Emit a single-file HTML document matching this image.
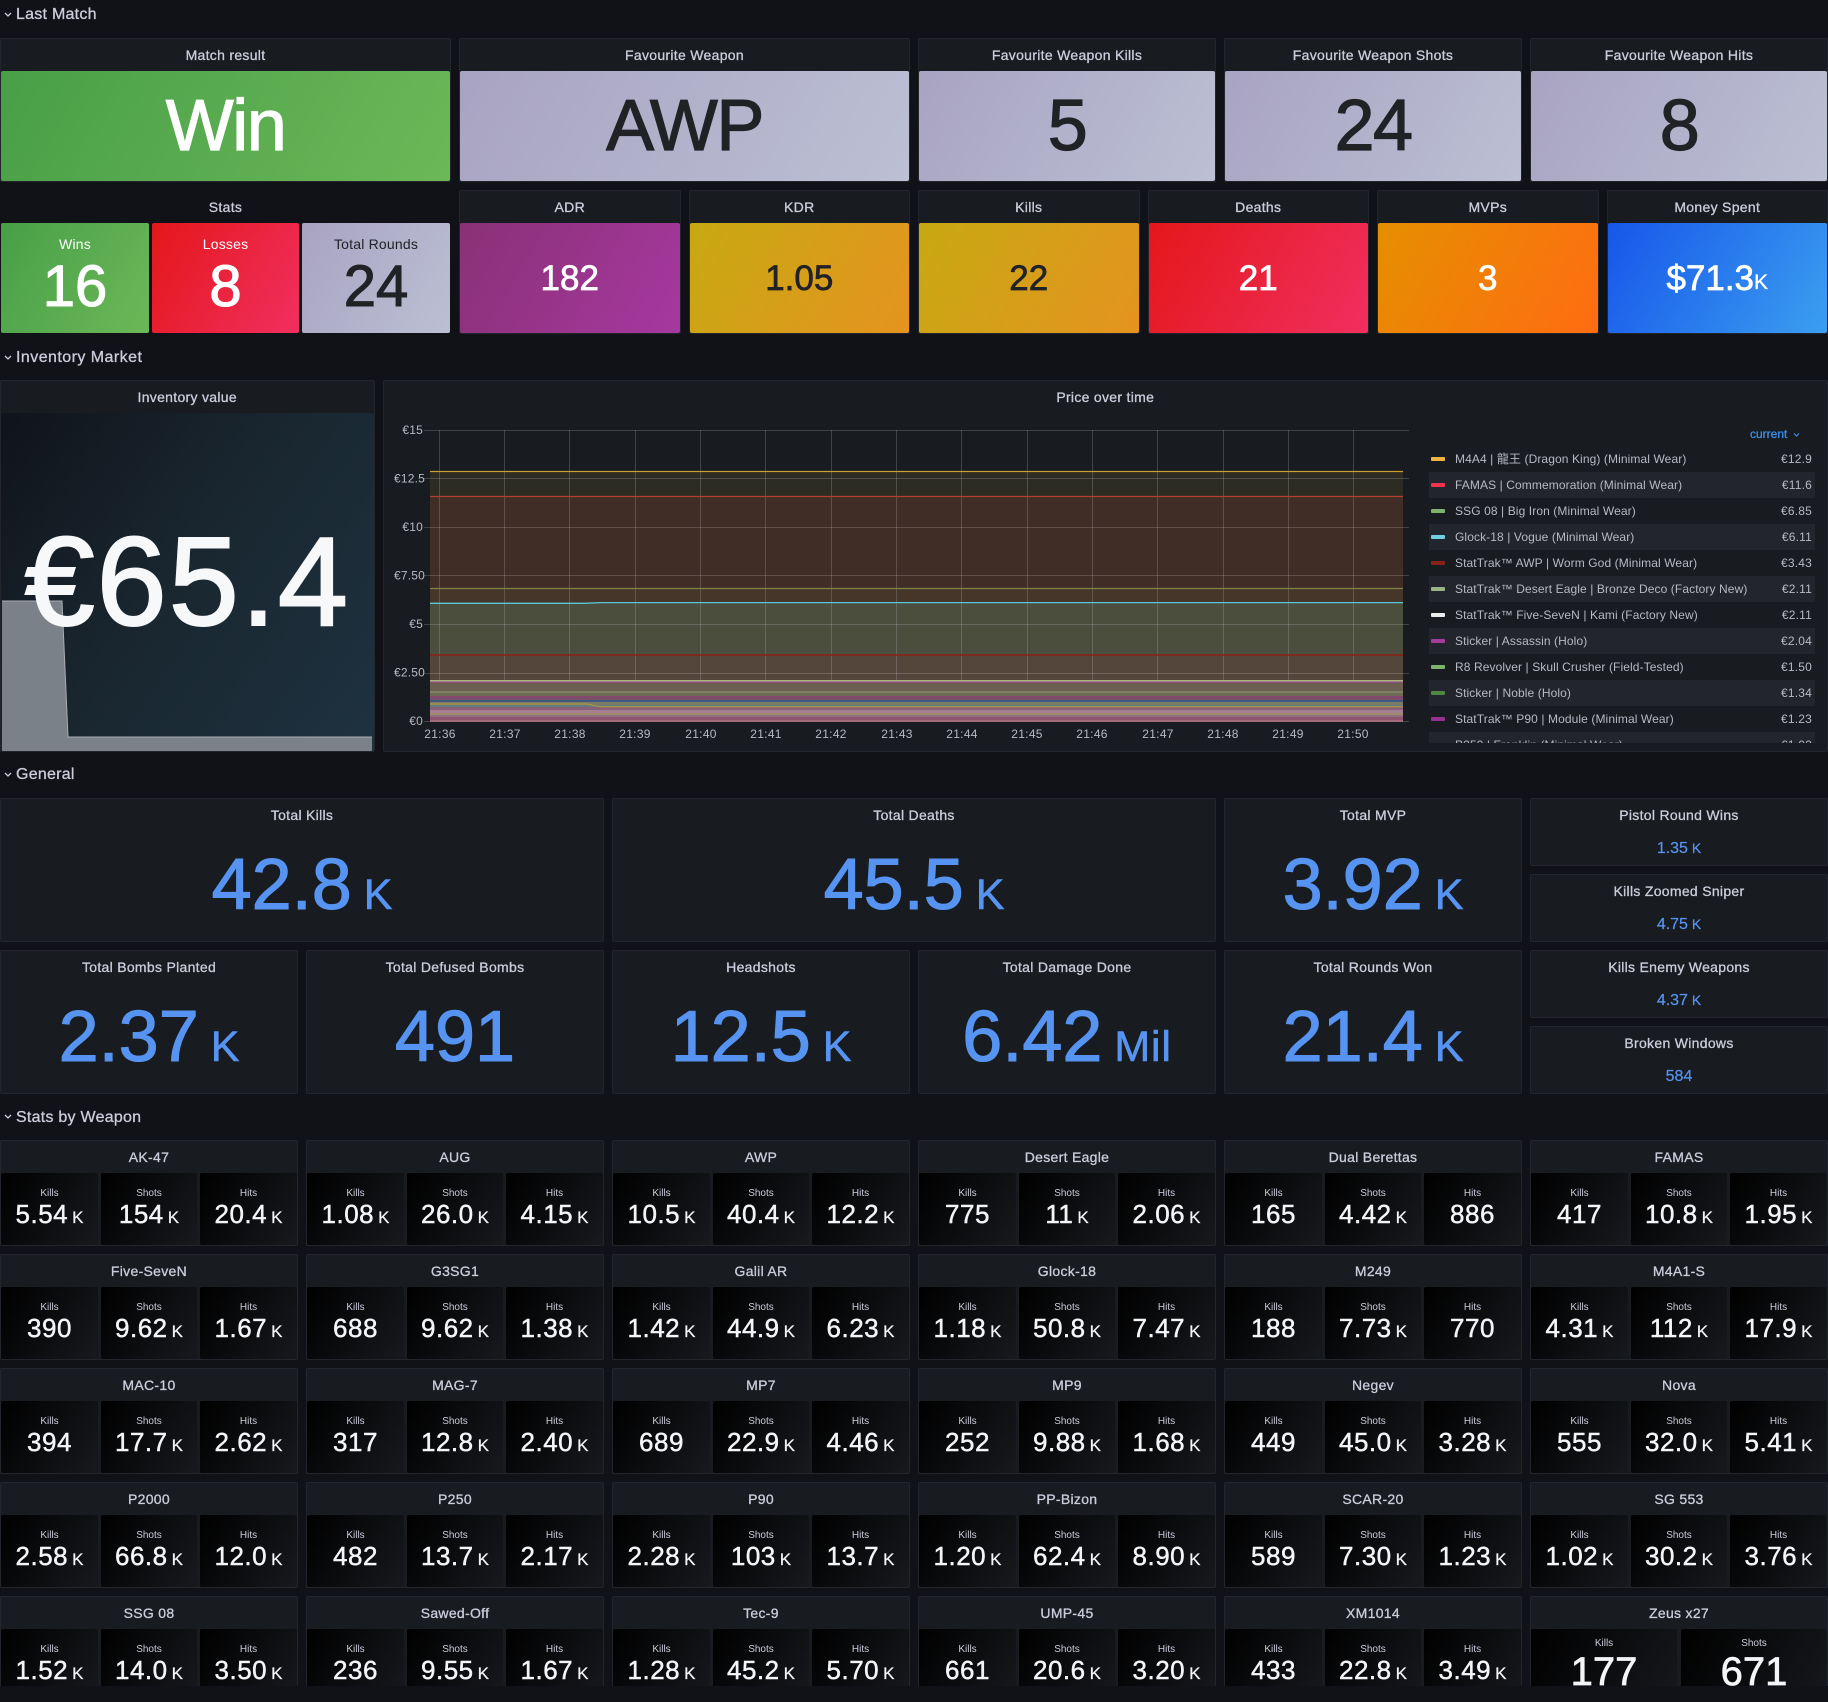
<!DOCTYPE html>
<html><head><meta charset="utf-8"><title>Dashboard</title>
<style>
html,body{margin:0;padding:0;background:#111217}
body{width:1828px;height:1702px;overflow:hidden;position:relative;font-family:"Liberation Sans","Noto Sans CJK JP",sans-serif;color:#ccccdc}
#c{position:absolute;left:0;top:0;width:1828px;height:1686px;overflow:hidden}
.r{position:absolute;left:16px;font-size:16px;line-height:28px;height:28px;margin-top:1px;-webkit-text-stroke:.3px;letter-spacing:.25px;white-space:nowrap}
.ch{position:absolute;left:0;width:16px;height:28px}
.p{position:absolute;box-sizing:border-box;background:#181b1f;border:1px solid #22252b;border-radius:2px}
.t{position:absolute;left:0;right:0;top:6px;height:20px;line-height:20px;font-size:14px;text-align:center;-webkit-text-stroke:.3px;letter-spacing:.3px;white-space:nowrap}
.f{position:absolute;left:0;right:0;top:32px;bottom:0;border-radius:2px;display:flex;align-items:center;justify-content:center;white-space:nowrap;color:#fff}
.big{font-size:72px;-webkit-text-stroke:1.2px;letter-spacing:-1.5px}
.mid{font-size:35px;-webkit-text-stroke:.7px;padding-top:2px;box-sizing:border-box}
.gr{background:linear-gradient(120deg,#489f47,#6cb858)}
.gy{background:linear-gradient(120deg,#a8a3c2,#bcc0d4)}
.rd{background:linear-gradient(120deg,#e4171a,#f12f60)}
.pu{background:linear-gradient(120deg,#8a3176,#a6389f)}
.ye{background:linear-gradient(120deg,#c7a912,#e5931f)}
.or{background:linear-gradient(120deg,#e58f00,#ff6c12)}
.bl{background:linear-gradient(120deg,#1756ea,#3b9ff0)}
.s{position:absolute;top:223px;height:110px;border-radius:2px;text-align:center;color:#fff}
.s i{position:absolute;left:0;right:0;top:11px;font-style:normal;font-size:14px;line-height:20px;letter-spacing:.2px}
.s b{position:absolute;left:0;right:0;top:32px;font-weight:normal;font-size:58px;line-height:64px;-webkit-text-stroke:1.1px}
.g{position:absolute;left:0;right:0;top:56px;text-align:center;color:#5794f2;font-size:72px;line-height:60px;-webkit-text-stroke:1.1px;white-space:nowrap}
.g u{text-decoration:none;font-size:43px;-webkit-text-stroke:.6px}
.h{position:absolute;left:0;right:0;top:39px;text-align:center;color:#5794f2;font-size:16px;line-height:20px;-webkit-text-stroke:.2px;white-space:nowrap}
.h u{text-decoration:none;font-size:14px}
.w{position:absolute;box-sizing:border-box;width:298px;height:106px;background:#181b1f;border:1px solid #22252b;border-radius:2px}
.b{position:absolute;top:32px;height:72px;width:96px;border-radius:2px;background:linear-gradient(120deg,#000,#17191d);text-align:center;color:#f4f5f8;white-space:nowrap}
.b1{left:0;width:97px}.b2{left:100px}.b3{left:199px;width:97px}
.b i{position:absolute;left:0;right:0;top:14px;font-style:normal;font-size:10px;line-height:14px;color:#ccccdc}
.b b{position:absolute;left:0;right:0;top:27px;font-weight:normal;font-size:26px;line-height:28px;letter-spacing:.5px;-webkit-text-stroke:.45px}
.b u{text-decoration:none;font-size:17px;margin-left:4px;letter-spacing:0;-webkit-text-stroke:.2px}
.z{width:146px;top:32px;height:80px}
.z b{font-size:40px;line-height:44px;top:21px;letter-spacing:0;-webkit-text-stroke:.7px}
.z i{top:8px}
.l{position:absolute;left:1429px;width:386px;height:26px;line-height:26px;font-size:12px;color:#b8b9c4;white-space:nowrap}
.l s{position:absolute;left:2px;top:11px;width:14px;height:4px;border-radius:1px;text-decoration:none}
.l span{position:absolute;left:26px;letter-spacing:.1px}
.l em{position:absolute;right:3px;font-style:normal;letter-spacing:.2px}
.e{background:#22252b}
</style></head><body><div id="c">

<svg class="ch" style="top:0" viewBox="0 0 16 28"><path d="M5 13l3 3 3-3" fill="none" stroke="#ccccdc" stroke-width="1.3"/></svg><div class="r" style="top:0">Last Match</div>

<div class="p" style="left:0;top:38px;width:451px;height:144px"><div class="t">Match result</div><div class="f gr big">Win</div></div>
<div class="p" style="left:459px;top:38px;width:451px;height:144px"><div class="t">Favourite Weapon</div><div class="f gy big" style="color:#202226">AWP</div></div>
<div class="p" style="left:918px;top:38px;width:298px;height:144px"><div class="t">Favourite Weapon Kills</div><div class="f gy big" style="color:#202226">5</div></div>
<div class="p" style="left:1224px;top:38px;width:298px;height:144px"><div class="t">Favourite Weapon Shots</div><div class="f gy big" style="color:#202226">24</div></div>
<div class="p" style="left:1530px;top:38px;width:298px;height:144px"><div class="t">Favourite Weapon Hits</div><div class="f gy big" style="color:#202226">8</div></div>

<div class="t" style="left:0;right:auto;width:451px;top:197px">Stats</div>
<div class="s gr" style="left:1px;width:148px"><i>Wins</i><b>16</b></div>
<div class="s rd" style="left:152px;width:147px"><i>Losses</i><b>8</b></div>
<div class="s gy" style="left:302px;width:148px;color:#202226"><i>Total Rounds</i><b>24</b></div>

<div class="p" style="left:459px;top:190px;width:221.5px;height:144px"><div class="t">ADR</div><div class="f pu mid">182</div></div>
<div class="p" style="left:688.5px;top:190px;width:221.5px;height:144px"><div class="t">KDR</div><div class="f ye mid" style="color:#202226">1.05</div></div>
<div class="p" style="left:918px;top:190px;width:221.5px;height:144px"><div class="t">Kills</div><div class="f ye mid" style="color:#202226">22</div></div>
<div class="p" style="left:1147.5px;top:190px;width:221.5px;height:144px"><div class="t">Deaths</div><div class="f rd mid">21</div></div>
<div class="p" style="left:1377px;top:190px;width:221.5px;height:144px"><div class="t">MVPs</div><div class="f or mid">3</div></div>
<div class="p" style="left:1606.5px;top:190px;width:221.5px;height:144px"><div class="t">Money Spent</div><div class="f bl mid">$71.3<span style="font-size:21px;position:relative;top:4px;-webkit-text-stroke:.3px">K</span></div></div>

<svg class="ch" style="top:343px" viewBox="0 0 16 28"><path d="M5 13l3 3 3-3" fill="none" stroke="#ccccdc" stroke-width="1.3"/></svg><div class="r" style="top:343px;letter-spacing:.45px">Inventory Market</div>

<div class="p" style="left:0;top:380px;width:374.5px;height:372px"><div class="t">Inventory value</div>
<div class="f" style="background:linear-gradient(125deg,#10131b 0%,#19262f 45%,#1e3240 100%);overflow:hidden">
<svg style="position:absolute;left:0;top:0" width="373" height="338" viewBox="0 0 373 338"><path d="M1 188H61L67 324H371V338H1Z" fill="#7b8188"/><path d="M1 188H61L67 324H371" fill="none" stroke="#a9aeb5" stroke-width="1"/></svg>
<span style="position:relative;font-size:126px;line-height:126px;top:0;-webkit-text-stroke:2px;color:#f7f8fa;letter-spacing:2px">€65.4</span></div></div>

<div class="p" style="left:382.5px;top:380px;width:1445.5px;height:372px"><div class="t">Price over time</div></div>
<svg style="position:absolute;left:0;top:0" width="1828" height="760" font-family="Liberation Sans" font-size="12" fill="#b8b9c4">
<rect x="430" y="471" width="973" height="25" fill="#2d2c22"/>
<rect x="430" y="496" width="973" height="92" fill="#402e26"/>
<rect x="430" y="588" width="973" height="15" fill="#453629"/>
<rect x="430" y="603" width="973" height="52" fill="#4b4d3d"/>
<rect x="430" y="655" width="973" height="26" fill="#54463b"/>
<g stroke="#cfcfd8" stroke-opacity=".22">
<path d="M424 430.5H1409M424 478.5H1409M424 527.5H1409M424 575.5H1409M424 624.5H1409M424 673.5H1409M424 721.5H1409"/>
<path d="M439.5 430V700M504.5 430V700M569.5 430V700M635.5 430V700M700.5 430V700M765.5 430V700M831.5 430V700M896.5 430V700M961.5 430V700M1027.5 430V700M1092.5 430V700M1157.5 430V700M1223.5 430V700M1288.5 430V700M1353.5 430V700"/>
</g>
<rect x="430" y="680" width="973" height="1.5" fill="#aab87a"/>
<rect x="430" y="681.5" width="973" height="1" fill="#a33fa0"/>
<rect x="430" y="682.5" width="973" height="9" fill="#6c5f52"/>
<rect x="430" y="691" width="973" height="2" fill="#7d8063"/>
<rect x="430" y="693" width="973" height="3" fill="#6e6a55"/>
<rect x="430" y="696" width="973" height="2" fill="#84486f"/>
<rect x="430" y="698" width="973" height="2" fill="#76506a"/>
<rect x="430" y="700" width="973" height="2" fill="#3f5a7e"/>
<rect x="430" y="702" width="973" height="3" fill="#7a7c66"/>
<rect x="430" y="705" width="973" height="2" fill="#5f7d7f"/>
<rect x="430" y="707" width="973" height="3" fill="#8a6078"/>
<rect x="430" y="710" width="973" height="3" fill="#a57f92"/>
<rect x="430" y="713" width="973" height="2" fill="#a08a6c"/>
<rect x="430" y="715" width="973" height="2" fill="#8f6f80"/>
<rect x="430" y="717" width="973" height="3" fill="#8f5570"/>
<rect x="430" y="720" width="973" height="2" fill="#a16b7a"/>
<g fill="none" stroke-width="1.3">
<path d="M430 471.5H1403" stroke="#c9a02e"/>
<path d="M430 496.5H1403" stroke="#b23d33"/>
<path d="M430 588.5H1403" stroke="#7c8345"/>
<path d="M430 603.3H585L600 602.6H1403" stroke="#5bc8da"/>
<path d="M430 655H1403" stroke="#8b1f16" stroke-width="1.6"/>
<path d="M430 704H587L600 706.7H1403" stroke="#c9a02e" stroke-opacity=".65"/>
</g>
<g text-anchor="end" letter-spacing=".2">
<text x="423" y="434">€15</text><text x="425" y="482.500">€12.5</text><text x="423" y="531">€10</text><text x="425" y="579.500">€7.50</text><text x="423" y="628">€5</text><text x="425" y="676.500">€2.50</text><text x="423" y="725">€0</text>
</g>
<g text-anchor="middle" letter-spacing=".3">
<text x="440" y="738">21:36</text><text x="505" y="738">21:37</text><text x="570" y="738">21:38</text><text x="635" y="738">21:39</text><text x="701" y="738">21:40</text><text x="766" y="738">21:41</text><text x="831" y="738">21:42</text><text x="897" y="738">21:43</text><text x="962" y="738">21:44</text><text x="1027" y="738">21:45</text><text x="1092" y="738">21:46</text><text x="1158" y="738">21:47</text><text x="1223" y="738">21:48</text><text x="1288" y="738">21:49</text><text x="1353" y="738">21:50</text>
</g>
<text x="1750" y="438" style="fill:#3d8fe8;stroke:#3d8fe8;stroke-width:.3px">current</text>
<path d="M1794 433.500l2.500 2.500 2.500-2.500" fill="none" stroke="#3d8fe8" stroke-width="1.200"/>
</svg>
<div style="position:absolute;left:0;top:445px;width:1828px;height:297.700px;overflow:hidden">
<div style="position:relative;top:-445px">
<div class="l" style="top:446px"><s style="background:#f2b43f"></s><span>M4A4 | 龍王 (Dragon King) (Minimal Wear)</span><em>€12.9</em></div>
<div class="l e" style="top:472px"><s style="background:#f2334e"></s><span>FAMAS | Commemoration (Minimal Wear)</span><em>€11.6</em></div>
<div class="l" style="top:498px"><s style="background:#7eb26d"></s><span>SSG 08 | Big Iron (Minimal Wear)</span><em>€6.85</em></div>
<div class="l e" style="top:524px"><s style="background:#6ed0e0"></s><span>Glock-18 | Vogue (Minimal Wear)</span><em>€6.11</em></div>
<div class="l" style="top:550px"><s style="background:#892015"></s><span>StatTrak™ AWP | Worm God (Minimal Wear)</span><em>€3.43</em></div>
<div class="l e" style="top:576px"><s style="background:#9ab385"></s><span>StatTrak™ Desert Eagle | Bronze Deco (Factory New)</span><em>€2.11</em></div>
<div class="l" style="top:602px"><s style="background:#ececec"></s><span>StatTrak™ Five-SeveN | Kami (Factory New)</span><em>€2.11</em></div>
<div class="l e" style="top:628px"><s style="background:#a83a9c"></s><span>Sticker | Assassin (Holo)</span><em>€2.04</em></div>
<div class="l" style="top:654px"><s style="background:#7eb26d"></s><span>R8 Revolver | Skull Crusher (Field-Tested)</span><em>€1.50</em></div>
<div class="l e" style="top:680px"><s style="background:#508642"></s><span>Sticker | Noble (Holo)</span><em>€1.34</em></div>
<div class="l" style="top:706px"><s style="background:#9b2f90"></s><span>StatTrak™ P90 | Module (Minimal Wear)</span><em>€1.23</em></div>
<div class="l e" style="top:732px"><span>P250 | Franklin (Minimal Wear)</span><em>€1.02</em></div>
</div></div>

<svg class="ch" style="top:760px" viewBox="0 0 16 28"><path d="M5 13l3 3 3-3" fill="none" stroke="#ccccdc" stroke-width="1.3"/></svg><div class="r" style="top:760px">General</div>

<div class="p" style="left:0;top:798px;width:604px;height:144px"><div class="t">Total Kills</div><div class="g">42.8<u> K</u></div></div>
<div class="p" style="left:612px;top:798px;width:604px;height:144px"><div class="t">Total Deaths</div><div class="g">45.5<u> K</u></div></div>
<div class="p" style="left:1224px;top:798px;width:298px;height:144px"><div class="t">Total MVP</div><div class="g">3.92<u> K</u></div></div>
<div class="p" style="left:1530px;top:798px;width:298px;height:68px"><div class="t">Pistol Round Wins</div><div class="h">1.35<u> K</u></div></div>
<div class="p" style="left:1530px;top:874px;width:298px;height:68px"><div class="t">Kills Zoomed Sniper</div><div class="h">4.75<u> K</u></div></div>
<div class="p" style="left:0;top:950px;width:298px;height:144px"><div class="t">Total Bombs Planted</div><div class="g">2.37<u> K</u></div></div>
<div class="p" style="left:306px;top:950px;width:298px;height:144px"><div class="t">Total Defused Bombs</div><div class="g">491</div></div>
<div class="p" style="left:612px;top:950px;width:298px;height:144px"><div class="t">Headshots</div><div class="g">12.5<u> K</u></div></div>
<div class="p" style="left:918px;top:950px;width:298px;height:144px"><div class="t">Total Damage Done</div><div class="g">6.42<u> <span style="letter-spacing:.8px">Mil</span></u></div></div>
<div class="p" style="left:1224px;top:950px;width:298px;height:144px"><div class="t">Total Rounds Won</div><div class="g">21.4<u> K</u></div></div>
<div class="p" style="left:1530px;top:950px;width:298px;height:68px"><div class="t">Kills Enemy Weapons</div><div class="h">4.37<u> K</u></div></div>
<div class="p" style="left:1530px;top:1026px;width:298px;height:68px"><div class="t">Broken Windows</div><div class="h" style="top:40px">584</div></div>

<svg class="ch" style="top:1102px" viewBox="0 0 16 28"><path d="M5 13l3 3 3-3" fill="none" stroke="#ccccdc" stroke-width="1.3"/></svg><div class="r" style="top:1103px">Stats by Weapon</div>

<div class="w" style="left:0;top:1140px"><div class="t">AK-47</div><div class="b b1"><i>Kills</i><b>5.54<u>K</u></b></div><div class="b b2"><i>Shots</i><b>154<u>K</u></b></div><div class="b b3"><i>Hits</i><b>20.4<u>K</u></b></div></div>
<div class="w" style="left:306px;top:1140px"><div class="t">AUG</div><div class="b b1"><i>Kills</i><b>1.08<u>K</u></b></div><div class="b b2"><i>Shots</i><b>26.0<u>K</u></b></div><div class="b b3"><i>Hits</i><b>4.15<u>K</u></b></div></div>
<div class="w" style="left:612px;top:1140px"><div class="t">AWP</div><div class="b b1"><i>Kills</i><b>10.5<u>K</u></b></div><div class="b b2"><i>Shots</i><b>40.4<u>K</u></b></div><div class="b b3"><i>Hits</i><b>12.2<u>K</u></b></div></div>
<div class="w" style="left:918px;top:1140px"><div class="t">Desert Eagle</div><div class="b b1"><i>Kills</i><b>775</b></div><div class="b b2"><i>Shots</i><b>11<u>K</u></b></div><div class="b b3"><i>Hits</i><b>2.06<u>K</u></b></div></div>
<div class="w" style="left:1224px;top:1140px"><div class="t">Dual Berettas</div><div class="b b1"><i>Kills</i><b>165</b></div><div class="b b2"><i>Shots</i><b>4.42<u>K</u></b></div><div class="b b3"><i>Hits</i><b>886</b></div></div>
<div class="w" style="left:1530px;top:1140px"><div class="t">FAMAS</div><div class="b b1"><i>Kills</i><b>417</b></div><div class="b b2"><i>Shots</i><b>10.8<u>K</u></b></div><div class="b b3"><i>Hits</i><b>1.95<u>K</u></b></div></div>

<div class="w" style="left:0;top:1254px"><div class="t">Five-SeveN</div><div class="b b1"><i>Kills</i><b>390</b></div><div class="b b2"><i>Shots</i><b>9.62<u>K</u></b></div><div class="b b3"><i>Hits</i><b>1.67<u>K</u></b></div></div>
<div class="w" style="left:306px;top:1254px"><div class="t">G3SG1</div><div class="b b1"><i>Kills</i><b>688</b></div><div class="b b2"><i>Shots</i><b>9.62<u>K</u></b></div><div class="b b3"><i>Hits</i><b>1.38<u>K</u></b></div></div>
<div class="w" style="left:612px;top:1254px"><div class="t">Galil AR</div><div class="b b1"><i>Kills</i><b>1.42<u>K</u></b></div><div class="b b2"><i>Shots</i><b>44.9<u>K</u></b></div><div class="b b3"><i>Hits</i><b>6.23<u>K</u></b></div></div>
<div class="w" style="left:918px;top:1254px"><div class="t">Glock-18</div><div class="b b1"><i>Kills</i><b>1.18<u>K</u></b></div><div class="b b2"><i>Shots</i><b>50.8<u>K</u></b></div><div class="b b3"><i>Hits</i><b>7.47<u>K</u></b></div></div>
<div class="w" style="left:1224px;top:1254px"><div class="t">M249</div><div class="b b1"><i>Kills</i><b>188</b></div><div class="b b2"><i>Shots</i><b>7.73<u>K</u></b></div><div class="b b3"><i>Hits</i><b>770</b></div></div>
<div class="w" style="left:1530px;top:1254px"><div class="t">M4A1-S</div><div class="b b1"><i>Kills</i><b>4.31<u>K</u></b></div><div class="b b2"><i>Shots</i><b>112<u>K</u></b></div><div class="b b3"><i>Hits</i><b>17.9<u>K</u></b></div></div>

<div class="w" style="left:0;top:1368px"><div class="t">MAC-10</div><div class="b b1"><i>Kills</i><b>394</b></div><div class="b b2"><i>Shots</i><b>17.7<u>K</u></b></div><div class="b b3"><i>Hits</i><b>2.62<u>K</u></b></div></div>
<div class="w" style="left:306px;top:1368px"><div class="t">MAG-7</div><div class="b b1"><i>Kills</i><b>317</b></div><div class="b b2"><i>Shots</i><b>12.8<u>K</u></b></div><div class="b b3"><i>Hits</i><b>2.40<u>K</u></b></div></div>
<div class="w" style="left:612px;top:1368px"><div class="t">MP7</div><div class="b b1"><i>Kills</i><b>689</b></div><div class="b b2"><i>Shots</i><b>22.9<u>K</u></b></div><div class="b b3"><i>Hits</i><b>4.46<u>K</u></b></div></div>
<div class="w" style="left:918px;top:1368px"><div class="t">MP9</div><div class="b b1"><i>Kills</i><b>252</b></div><div class="b b2"><i>Shots</i><b>9.88<u>K</u></b></div><div class="b b3"><i>Hits</i><b>1.68<u>K</u></b></div></div>
<div class="w" style="left:1224px;top:1368px"><div class="t">Negev</div><div class="b b1"><i>Kills</i><b>449</b></div><div class="b b2"><i>Shots</i><b>45.0<u>K</u></b></div><div class="b b3"><i>Hits</i><b>3.28<u>K</u></b></div></div>
<div class="w" style="left:1530px;top:1368px"><div class="t">Nova</div><div class="b b1"><i>Kills</i><b>555</b></div><div class="b b2"><i>Shots</i><b>32.0<u>K</u></b></div><div class="b b3"><i>Hits</i><b>5.41<u>K</u></b></div></div>

<div class="w" style="left:0;top:1482px"><div class="t">P2000</div><div class="b b1"><i>Kills</i><b>2.58<u>K</u></b></div><div class="b b2"><i>Shots</i><b>66.8<u>K</u></b></div><div class="b b3"><i>Hits</i><b>12.0<u>K</u></b></div></div>
<div class="w" style="left:306px;top:1482px"><div class="t">P250</div><div class="b b1"><i>Kills</i><b>482</b></div><div class="b b2"><i>Shots</i><b>13.7<u>K</u></b></div><div class="b b3"><i>Hits</i><b>2.17<u>K</u></b></div></div>
<div class="w" style="left:612px;top:1482px"><div class="t">P90</div><div class="b b1"><i>Kills</i><b>2.28<u>K</u></b></div><div class="b b2"><i>Shots</i><b>103<u>K</u></b></div><div class="b b3"><i>Hits</i><b>13.7<u>K</u></b></div></div>
<div class="w" style="left:918px;top:1482px"><div class="t">PP-Bizon</div><div class="b b1"><i>Kills</i><b>1.20<u>K</u></b></div><div class="b b2"><i>Shots</i><b>62.4<u>K</u></b></div><div class="b b3"><i>Hits</i><b>8.90<u>K</u></b></div></div>
<div class="w" style="left:1224px;top:1482px"><div class="t">SCAR-20</div><div class="b b1"><i>Kills</i><b>589</b></div><div class="b b2"><i>Shots</i><b>7.30<u>K</u></b></div><div class="b b3"><i>Hits</i><b>1.23<u>K</u></b></div></div>
<div class="w" style="left:1530px;top:1482px"><div class="t">SG 553</div><div class="b b1"><i>Kills</i><b>1.02<u>K</u></b></div><div class="b b2"><i>Shots</i><b>30.2<u>K</u></b></div><div class="b b3"><i>Hits</i><b>3.76<u>K</u></b></div></div>

<div class="w" style="left:0;top:1596px"><div class="t">SSG 08</div><div class="b b1"><i>Kills</i><b>1.52<u>K</u></b></div><div class="b b2"><i>Shots</i><b>14.0<u>K</u></b></div><div class="b b3"><i>Hits</i><b>3.50<u>K</u></b></div></div>
<div class="w" style="left:306px;top:1596px"><div class="t">Sawed-Off</div><div class="b b1"><i>Kills</i><b>236</b></div><div class="b b2"><i>Shots</i><b>9.55<u>K</u></b></div><div class="b b3"><i>Hits</i><b>1.67<u>K</u></b></div></div>
<div class="w" style="left:612px;top:1596px"><div class="t">Tec-9</div><div class="b b1"><i>Kills</i><b>1.28<u>K</u></b></div><div class="b b2"><i>Shots</i><b>45.2<u>K</u></b></div><div class="b b3"><i>Hits</i><b>5.70<u>K</u></b></div></div>
<div class="w" style="left:918px;top:1596px"><div class="t">UMP-45</div><div class="b b1"><i>Kills</i><b>661</b></div><div class="b b2"><i>Shots</i><b>20.6<u>K</u></b></div><div class="b b3"><i>Hits</i><b>3.20<u>K</u></b></div></div>
<div class="w" style="left:1224px;top:1596px"><div class="t">XM1014</div><div class="b b1"><i>Kills</i><b>433</b></div><div class="b b2"><i>Shots</i><b>22.8<u>K</u></b></div><div class="b b3"><i>Hits</i><b>3.49<u>K</u></b></div></div>
<div class="w" style="left:1530px;top:1596px"><div class="t">Zeus x27</div><div class="b z" style="left:0"><i>Kills</i><b>177</b></div><div class="b z" style="left:150px"><i>Shots</i><b>671</b></div></div>

</div></body></html>
